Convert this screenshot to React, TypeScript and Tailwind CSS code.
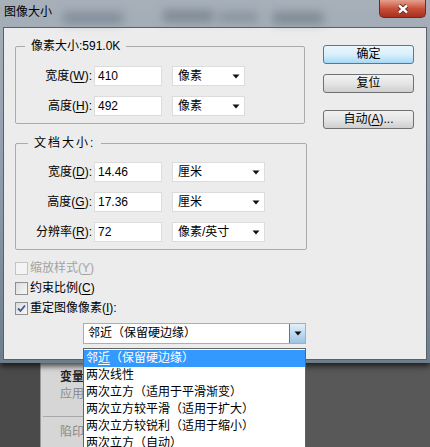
import React from "react";

// rows for the two group boxes
const pixelRows = [
	{ label: "宽度", key: "W", value: "410", unit: "像素" },
	{ label: "高度", key: "H", value: "492", unit: "像素" }
];

const docRows = [
	{ label: "宽度", key: "D", value: "14.46", unit: "厘米" },
	{ label: "高度", key: "G", value: "17.36", unit: "厘米" },
	{ label: "分辨率", key: "R", value: "72", unit: "像素/英寸" }
];

const listItems = [
	"两次线性",
	"两次立方（适用于平滑渐变）",
	"两次立方较平滑（适用于扩大）",
	"两次立方较锐利（适用于缩小）",
	"两次立方（自动）"
];

function Arrow() {
	return (
		<svg width="8" height="5" viewBox="0 0 8 5">
			<path d="M0.5 0.5h7L4 4.5z" fill="#111" />
		</svg>
	);
}

function FieldRow({
	label,
	k,
	value,
	unit,
	selectClass
}: {
	label: string;
	k: string;
	value: string;
	unit: string;
	selectClass: string;
}) {
	return (
		<div className="flex items-center h-[20px]">
			<span className="w-[78px] pr-[2px] text-right leading-[20px] whitespace-nowrap">
				{label}(<span className="underline underline-offset-2">{k}</span>):
			</span>
			<div className="w-[68px] h-[20px] bg-white border border-[#dcdcdc] pl-[3px] leading-[18px]">
				{value}
			</div>
			<div
				className={`${selectClass} ml-[10px] h-[20px] bg-white border border-[#dcdcdc] flex items-center justify-between pl-[5px] pr-[4px]`}
			>
				<span className="leading-[18px]">{unit}</span>
				<Arrow />
			</div>
		</div>
	);
}

function CheckBox({ checked, disabled }: { checked?: boolean; disabled?: boolean }) {
	return (
		<div
			className={`w-[13px] h-[13px] border flex items-center justify-center ${
				disabled
					? "border-[#c4c4c4] bg-[#f4f4f4]"
					: "border-[#8e8f8f] bg-gradient-to-br from-[#dcdcdc] to-[#f8f8f8]"
			}`}
		>
			{checked && (
				<svg width="9" height="9" viewBox="0 0 9 9">
					<path
						d="M1 4.5 L3.5 7 L8 1.5"
						fill="none"
						stroke="#3d5a96"
						strokeWidth="1.8"
					/>
				</svg>
			)}
		</div>
	);
}

function Button({ children, primary }: { children: React.ReactNode; primary?: boolean }) {
	return (
		<div
			className={`w-[91px] h-[19px] rounded-[3px] border flex items-center justify-center leading-[17px] ${
				primary
					? "border-[#3c7fb1] bg-gradient-to-b from-[#eaf6fd] via-[#d9f0fc] to-[#a7d9f5]"
					: "border-[#707070] bg-gradient-to-b from-[#f2f2f2] via-[#e5e5e5] to-[#cfcfcf]"
			}`}
		>
			{children}
		</div>
	);
}

export default function App() {
	return (
		<div className="relative w-[430px] h-[447px] overflow-hidden bg-[#585858] text-[12px] text-black font-['Liberation_Sans','Noto_Sans_CJK_SC',sans-serif]">
			{/* Dialog window */}
			<div className="relative z-10 h-[363px] flex flex-col px-[3px] pb-[3px] bg-gradient-to-b from-[#a7b0b9] via-[#8e9cab] to-[#6e7d8c] shadow-[0_3px_6px_rgba(0,0,0,0.7)]">
				{/* Title bar */}
				<div className="relative h-[27px] flex items-start justify-between">
					<div className="absolute left-[60px] top-[12px] w-[60px] h-[12px] bg-[#6c7a88] blur-[5px] opacity-60" />
					<div className="absolute left-[160px] top-[10px] w-[50px] h-[12px] bg-[#64727f] blur-[5px] opacity-60" />
					<div className="absolute left-[215px] top-[12px] w-[40px] h-[10px] bg-[#6c7a88] blur-[5px] opacity-50" />
					<div className="absolute left-[270px] top-[12px] w-[50px] h-[12px] bg-[#64727f] blur-[5px] opacity-60" />
					<span className="relative pl-[1px] pt-[4px] leading-[16px]">图像大小</span>
					<div className="relative mr-[1px] w-[47px] h-[18px] rounded-b-[5px] border border-t-0 border-[#6b2a22] bg-gradient-to-b from-[#e4a08e] via-[#c9503a] to-[#a5301e] flex items-center justify-center">
						<svg width="12" height="10" viewBox="0 0 12 10">
							<path d="M2 1.5 L10 8.5 M10 1.5 L2 8.5" stroke="#4a1a14" strokeWidth="4" />
							<path d="M2 1.5 L10 8.5 M10 1.5 L2 8.5" stroke="#ffffff" strokeWidth="2.4" />
						</svg>
					</div>
				</div>

				{/* Client area */}
				<div className="flex-1 bg-[#ececec] border border-[#55616d] flex pl-[11px]">
					{/* Left column */}
					<div className="w-[292px] flex flex-col">
						<fieldset className="mt-[10px] w-[290px] border border-[#ababab] rounded-[2px] pl-0 pt-[12px] pb-[7px] flex flex-col gap-[10px]">
							<legend className="ml-[9px] px-[6px] leading-[16px]">像素大小:591.0K</legend>
							{pixelRows.map((r) => (
								<FieldRow
									key={r.key}
									label={r.label}
									k={r.key}
									value={r.value}
									unit={r.unit}
									selectClass="w-[73px]"
								/>
							))}
						</fieldset>

						<fieldset className="mt-[11px] w-[292px] border border-[#ababab] rounded-[2px] pt-[11px] pb-[7px] flex flex-col gap-[10px]">
							<legend className="ml-[12px] px-[6px] leading-[16px] tracking-[2px]">文档大小:</legend>
							{docRows.map((r) => (
								<FieldRow
									key={r.key}
									label={r.label}
									k={r.key}
									value={r.value}
									unit={r.unit}
									selectClass="w-[93px]"
								/>
							))}
						</fieldset>

						{/* Checkboxes */}
						<div className="mt-[8px] flex flex-col">
							<div className="h-[20px] flex items-center gap-[2px] text-[#a3a3a3]">
								<CheckBox disabled />
								<span>
									缩放样式(<span className="underline underline-offset-2">Y</span>)
								</span>
							</div>
							<div className="h-[20px] flex items-center gap-[2px]">
								<CheckBox />
								<span>
									约束比例(<span className="underline underline-offset-2">C</span>)
								</span>
							</div>
							<div className="h-[20px] flex items-center gap-[2px]">
								<CheckBox checked />
								<span>
									重定图像像素(<span className="underline underline-offset-2">I</span>):
								</span>
							</div>
						</div>

						{/* Combo box */}
						<div className="mt-[5px] ml-[68px] w-[223px] h-[21px] bg-white border border-[#abadb3] flex items-center justify-between">
							<span className="pl-[4px] leading-[19px]">邻近（保留硬边缘）</span>
							<div className="w-[16px] h-[19px] border-l border-[#3c7fb1] bg-gradient-to-b from-[#e3f0fa] to-[#9cc3e2] flex items-center justify-center">
								<Arrow />
							</div>
						</div>
					</div>

					{/* Buttons */}
					<div className="ml-[16px] mt-[17px] flex flex-col gap-[10px]">
						<Button primary>确定</Button>
						<Button>复位</Button>
						<div className="mt-[7px]">
							<Button>
								自动(<span className="underline underline-offset-2">A</span>)...
							</Button>
						</div>
					</div>
				</div>
			</div>

			{/* Panel behind the dialog */}
			<div className="flex h-[84px]">
				<div className="w-[40px] bg-[#4a4a4a]" />
				<div className="w-[260px] bg-[#d6d6d6] border-l border-[#9a9a9a] flex flex-col pt-[6px]">
					<span className="pl-[19px] leading-[17px] text-[#222] font-bold">变量</span>
					<span className="pl-[19px] leading-[17px] text-[#8a8a8a]">应用</span>
					<div className="mt-[13px] ml-[2px] border-t border-[#a8a8a8]" />
					<span className="mt-[7px] pl-[19px] leading-[17px] text-[#8a8a8a]">陷印</span>
				</div>
			</div>

			{/* Drop-down list */}
			<div className="absolute z-20 left-[83px] top-[348px] w-[223px] h-[110px] bg-white border border-[#646464] pt-[1px]">
				<div className="h-[17px] bg-[#3399ff] text-white pl-[2px] leading-[17px]">
					邻<span className="underline underline-offset-2">近</span>（保留硬边缘）
				</div>
				{listItems.map((item) => (
					<div key={item} className="h-[17px] pl-[2px] leading-[17px]">
						{item}
					</div>
				))}
			</div>
		</div>
	);
}
